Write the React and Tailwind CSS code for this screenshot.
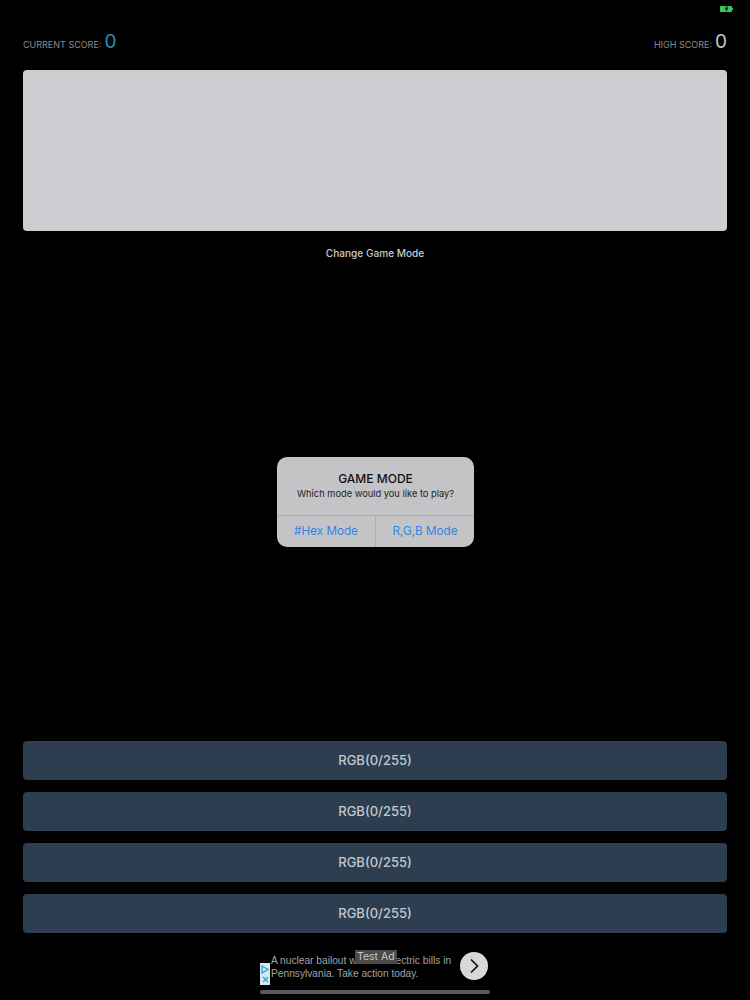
const FONT = "font-['Inter','Noto_Sans',sans-serif]"

function Battery() {
  return (
    <svg width="13" height="6" viewBox="0 0 13 6" className="block">
      <rect x="0" y="0" width="12" height="6" rx="1" fill="#34c759" />
      <rect x="12" y="2" width="1" height="2" fill="#34c759" />
      <path d="M7 0 L4.8 3.2 H6.4 L5.6 6 L8.4 2.6 H6.8 L7.8 0 Z" fill="#000" />
    </svg>
  )
}

function Score({ label, value, color }) {
  return (
    <div className="flex items-baseline gap-[3px]">
      <span className="text-[9px] text-[#8b8b8f]">{label}</span>
      <span className={`text-[19px] leading-[22px] ${color}`}>{value}</span>
    </div>
  )
}

function AnswerButton() {
  return (
    <button className="flex h-[39px] w-full items-center justify-center rounded-[4px] bg-[#2c3e50] pt-[1px] text-[13px] font-medium text-[#c3c7cc]">
      RGB(0/255)
    </button>
  )
}

function AdBanner() {
  return (
    <div className="relative flex h-[36px] w-[230px] items-center self-center">
      <div className="mt-[11px] flex h-[22px] w-[10px] shrink-0 flex-col items-center justify-center gap-[2px] bg-[#d8e6ee]">
        <svg width="8" height="9" viewBox="0 0 8 9">
          <path d="M1 1 L7 4.5 L1 8 Z" fill="none" stroke="#2aa3d6" strokeWidth="1.3" />
        </svg>
        <svg width="7" height="7" viewBox="0 0 7 7">
          <path d="M1 1 L6 6 M6 1 L1 6" stroke="#2aa3d6" strokeWidth="1.2" />
        </svg>
      </div>
      <p className="mt-[-2px] ml-[1px] w-[186px] shrink-0 font-['Liberation_Sans',sans-serif] text-[10.2px] leading-[13px] text-[#a3a3a5]">
        A nuclear bailout will hike electric bills in Pennsylvania. Take action today.
      </p>
      <div className="absolute top-[2px] right-[2px] flex h-[28px] w-[28px] items-center justify-center rounded-full bg-[#d8d8d8]">
        <svg width="14" height="16" viewBox="0 0 14 16">
          <path d="M4 1.5 L10.5 8 L4 14.5" fill="none" stroke="#111" strokeWidth="1.7" />
        </svg>
      </div>
      <span className="absolute top-0 left-[95px] rounded-[1px] bg-[#4a4a4a] px-[2px] text-[10.5px] leading-[14px] text-[#c8c8c8]">
        Test Ad
      </span>
    </div>
  )
}

export default function App() {
  return (
    <div className={`relative flex h-[1000px] w-[750px] flex-col overflow-hidden bg-black ${FONT}`}>
      <div className="flex h-[20px] justify-end pt-[6px] pr-[17px]">
        <Battery />
      </div>

      <div className="mt-[10px] flex h-[24px] items-center justify-between px-[23px]">
        <Score label="CURRENT SCORE:" value="0" color="text-[#2b8fb8]" />
        <Score label="HIGH SCORE:" value="0" color="text-[#c8c8ca]" />
      </div>

      <div className="mx-[23px] mt-[16px] h-[161px] rounded-[4px] bg-[#cdccd0]" />

      <p className="mt-[15px] text-center text-[10.1px] leading-[14px] font-medium text-[#c9c9cb]">Change Game Mode</p>

      <div className="mt-auto flex flex-col gap-[12px] px-[23px]">
        <AnswerButton />
        <AnswerButton />
        <AnswerButton />
        <AnswerButton />
      </div>

      <div className="mt-[17px] flex flex-col">
        <AdBanner />
        <div className="mt-[4px] mb-[6px] h-[4px] w-[230px] self-center rounded-full bg-[#5a5a5c]" />
      </div>

      {/* alert over the page */}
      <div className="absolute top-[457px] left-[277px] w-[197px] overflow-hidden rounded-[10px] bg-[#c4c4c6]">
        <div className="flex h-[58px] flex-col items-center pt-[14px]">
          <p className="text-[12px] leading-[15px] font-medium text-[#111]">GAME MODE</p>
          <p className="mt-[1px] text-[9.3px] leading-[14px] text-[#222]">Which mode would you like to play?</p>
        </div>
        <div className="flex h-[32px] border-t border-[#adadb0]">
          <button className="flex-1 border-r border-[#adadb0] text-[11.7px] text-[#2f86e0]">#Hex Mode</button>
          <button className="flex-1 text-[11.7px] text-[#2f86e0]">R,G,B Mode</button>
        </div>
      </div>
    </div>
  )
}
